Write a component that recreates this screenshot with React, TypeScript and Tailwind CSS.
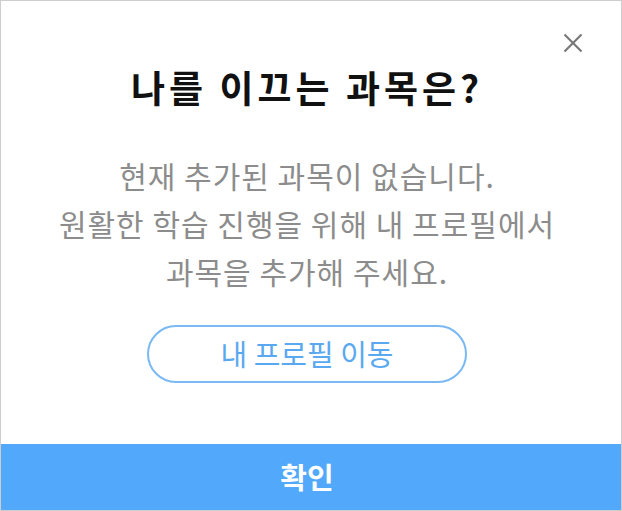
const font = { fontFamily: '"Noto Sans CJK KR", "Noto Sans", sans-serif' };

function CloseIcon() {
  return (
    <svg width="20" height="20" viewBox="0 0 20 20">
      <title>Close</title>
      <line x1="1.5" y1="1.5" x2="18.5" y2="18.5" stroke="#777" strokeWidth="2.2" />
      <line x1="18.5" y1="1.5" x2="1.5" y2="18.5" stroke="#777" strokeWidth="2.2" />
    </svg>
  );
}

export default function App() {
  return (
    <div
      className="w-[622px] h-[511px] bg-white border border-[#cdcdcd] flex flex-col"
      style={font}
    >
      <div className="relative flex-1 flex flex-col items-center pr-[8px]">
        <button className="absolute right-[38px] top-[32px]">
          <CloseIcon />
        </button>

        <h1 className="mt-[61px] text-[37px] leading-[50px] font-bold tracking-[4px] text-[#111]">
          나를 이끄는 과목은?
        </h1>

        <p className="mt-[39px] text-center text-[30px] leading-[48px] tracking-[1px] text-[#8c8c8c]">
          현재 추가된 과목이 없습니다.
          <br />
          원활한 학습 진행을 위해 내 프로필에서
          <br />
          과목을 추가해 주세요.
        </p>

        <button className="mt-[30px] w-[320px] h-[58px] rounded-full border-2 border-[#7ab9f3] text-[29px] text-[#5aa9f0]">
          내 프로필 이동
        </button>
      </div>

      <button className="h-[66px] w-full pr-[8px] bg-[#52a9fb] text-white text-[29px] font-bold">
        확인
      </button>
    </div>
  );
}
